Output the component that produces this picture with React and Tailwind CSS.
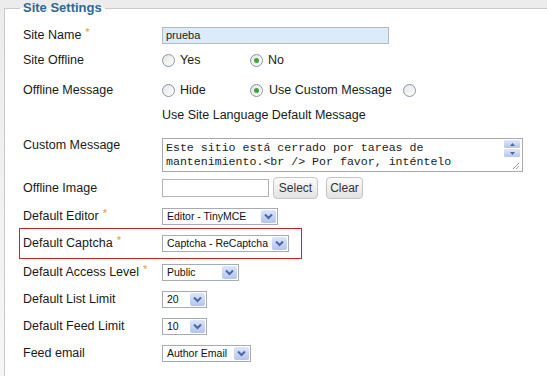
const font = { fontFamily: '"Liberation Sans", Arial, sans-serif' };

function Star() {
  return <span className="relative top-[-3px] ml-[4px] text-[11px] text-[#e29a3a]">*</span>;
}

function Radio({ checked }) {
  return (
    <span className="flex h-[13px] w-[13px] items-center justify-center rounded-full border border-[#8796ab] bg-gradient-to-br from-[#e4e4e0] to-white">
      {checked && <span className="h-[5px] w-[5px] rounded-full bg-[#3aa53a]" />}
    </span>
  );
}

function Arrow() {
  return (
    <span className="mr-[1px] flex h-[13px] w-[15px] shrink-0 items-center justify-center rounded-[2px] bg-gradient-to-b from-[#dce6fc] to-[#b3c4ee]">
      <svg width="9" height="7" viewBox="0 0 9 7">
        <path d="M1 1.5 L4.5 5 L8 1.5" fill="none" stroke="#4c66a4" strokeWidth="2" />
      </svg>
    </span>
  );
}

function Select({ value, width }) {
  return (
    <div className={`flex h-[17px] items-center border border-[#a5acb5] bg-white ${width}`}>
      <span className="flex-1 overflow-hidden whitespace-nowrap pl-[4px] text-[10.5px] leading-[15px] text-[#111]">{value}</span>
      <Arrow />
    </div>
  );
}

function Row({ label, star, h, children, top }) {
  return (
    <div className={`flex ${top ? 'items-start' : 'items-center'} pl-[18px] ${h}`}>
      <div className={`w-[139px] shrink-0 ${top ? 'mt-[16px]' : ''}`}>
        {label}
        {star && <Star />}
      </div>
      {children}
    </div>
  );
}

function Button({ children, w }) {
  return (
    <span className={`flex h-[22px] items-center justify-center rounded-[4px] border border-[#c4c4c4] bg-gradient-to-b from-[#fbfbfb] to-[#e2e2e2] text-[12px] text-[#333] ${w}`}>
      {children}
    </span>
  );
}

export default function App() {
  return (
    <div className="h-[376px] w-[547px] overflow-hidden bg-gradient-to-b from-[#ececec] to-[#f6f6f6] pl-[4px]" style={font}>
      <fieldset className="w-[620px] border border-[#c9c9c9] bg-white text-[12.5px] leading-[15px] text-[#1a1a1a]">
        <legend className="ml-[15px] px-[3px] text-[13px] font-bold leading-[16px] text-[#2f6896]">Site Settings</legend>
        <div className="pt-[6px]">
          <Row label="Site Name" star h="h-[26px]">
            <div className="flex h-[17px] w-[227px] items-center border border-[#b3bac2] bg-[#dcebfa] pl-[3px] text-[11px] text-[#222]">
              prueba
            </div>
          </Row>
          <Row label="Site Offline" h="h-[24px]">
            <div className="flex items-center">
              <Radio />
              <span className="ml-[5px] w-[70px]">Yes</span>
              <Radio checked />
              <span className="ml-[5px]">No</span>
            </div>
          </Row>
          <Row label="Offline Message" h="h-[36px]">
            <div className="flex items-center">
              <Radio />
              <span className="ml-[5px] w-[70px]">Hide</span>
              <Radio checked />
              <span className="ml-[6px] mr-[11px]">Use Custom Message</span>
              <Radio />
            </div>
          </Row>
          <Row label="" h="h-[14px]">
            <span>Use Site Language Default Message</span>
          </Row>
          <Row label="Custom Message" h="h-[50px]" top>
            <div className="mt-[16px] flex h-[34px] w-[361px] border border-[#a9a9a9] bg-white">
              <div className="flex-1 overflow-hidden whitespace-pre pl-[3px] pt-[2px] text-[11.6px] leading-[14px] text-[#222]" style={{ fontFamily: '"Liberation Mono", "Courier New", monospace' }}>
                {'Este sitio está cerrado por tareas de\nmantenimiento.<br /> Por favor, inténtelo'}
              </div>
              <div className="relative w-[18px]">
                <div className="mt-[1px] flex h-[8px] w-[16px] items-center justify-center rounded-[1px] bg-gradient-to-b from-[#dfe7fb] to-[#b5c5ee]">
                  <svg width="5" height="3" viewBox="0 0 5 3"><path d="M0 3 L2.5 0 L5 3Z" fill="#4c66a4" /></svg>
                </div>
                <div className="mt-[1px] flex h-[8px] w-[16px] items-center justify-center rounded-[1px] bg-gradient-to-b from-[#dfe7fb] to-[#b5c5ee]">
                  <svg width="5" height="3" viewBox="0 0 5 3"><path d="M0 0 L2.5 3 L5 0Z" fill="#4c66a4" /></svg>
                </div>
                <svg className="absolute bottom-[1px] right-[2px]" width="8" height="8" viewBox="0 0 8 8">
                  <path d="M7 1 L1 7 M7 4 L4 7" stroke="#999" strokeWidth="1" />
                </svg>
              </div>
            </div>
          </Row>
          <Row label="Offline Image" h="h-[32px]">
            <div className="flex items-center">
              <div className="h-[18px] w-[107px] border border-[#b3b3b3] bg-white" />
              <span className="ml-[4px]"><Button w="w-[45px]">Select</Button></span>
              <span className="ml-[8px]"><Button w="w-[37px]">Clear</Button></span>
            </div>
          </Row>
          <Row label="Default Editor" star h="h-[24px]">
            <Select value="Editor - TinyMCE" width="w-[116px]" />
          </Row>
          <div className="ml-[14px] flex h-[31px] w-[283px] items-center border border-[#c8232c] pl-[3px]">
            <div className="w-[139px] shrink-0">
              Default Captcha
              <Star />
            </div>
            <Select value="Captcha - ReCaptcha" width="w-[127px]" />
          </div>
          <Row label="Default Access Level" star h="h-[27px]">
            <Select value="Public" width="w-[77px]" />
          </Row>
          <Row label="Default List Limit" h="h-[27px]">
            <Select value="20" width="w-[45px]" />
          </Row>
          <Row label="Default Feed Limit" h="h-[27px]">
            <Select value="10" width="w-[45px]" />
          </Row>
          <Row label="Feed email" h="h-[27px]">
            <Select value="Author Email" width="w-[89px]" />
          </Row>
          <div className="h-[40px]" />
        </div>
      </fieldset>
    </div>
  );
}
